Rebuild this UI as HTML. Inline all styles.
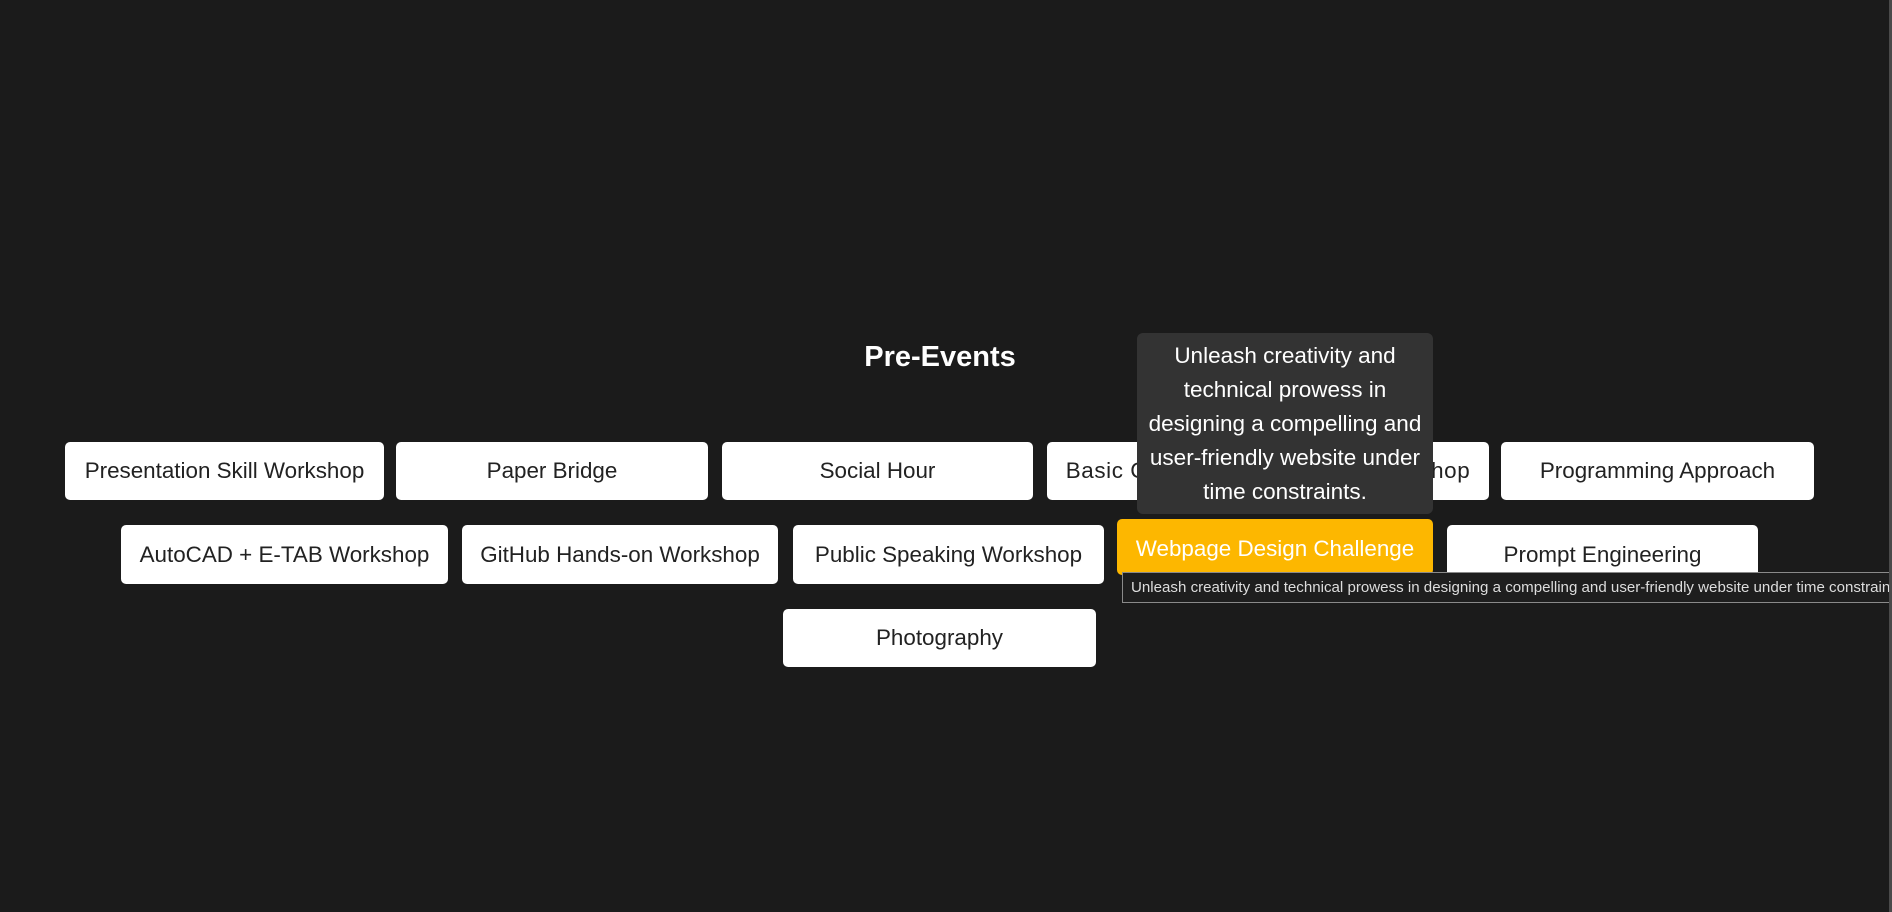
<!DOCTYPE html>
<html><head><meta charset="utf-8"><style>
html,body{margin:0;padding:0;}
body{width:1892px;height:912px;background:#1b1b1b;position:relative;overflow:hidden;font-family:"Liberation Sans",Arial,sans-serif;}
.b{position:absolute;background:#fff;border-radius:5px;color:#222;font-size:22.4px;display:flex;align-items:center;justify-content:center;white-space:nowrap;overflow:hidden;}
h2{position:absolute;left:0;width:1880px;top:341px;margin:0;text-align:center;color:#fff;font-size:29px;font-weight:bold;}
.tip{position:absolute;left:1137px;top:333px;width:296px;height:181px;background:#333;border-radius:6px;color:#fff;font-size:22.5px;line-height:34px;text-align:center;box-sizing:border-box;padding:6px 4px;}
.nt{position:absolute;left:1122px;top:572px;width:780px;height:31px;background:#1e1e1e;border:1px solid #8a8a8a;box-sizing:border-box;color:#ddd;font-size:15.1px;line-height:29px;padding-left:8px;white-space:nowrap;overflow:hidden;}
.sb{position:absolute;right:0;top:0;width:3px;height:912px;background:#4a4a4a;}
</style></head><body>
<h2>Pre-Events</h2>
<div class="b" style="left:65px;top:442px;width:319px;height:58px">Presentation Skill Workshop</div>
<div class="b" style="left:396px;top:442px;width:312px;height:58px">Paper Bridge</div>
<div class="b" style="left:722px;top:442px;width:311px;height:58px">Social Hour</div>
<div class="b" style="left:1047px;top:442px;width:442px;height:58px;letter-spacing:0.6px">Basic Computer Networking Workshop</div>
<div class="b" style="left:1501px;top:442px;width:313px;height:58px">Programming Approach</div>
<div class="b" style="left:121px;top:525px;width:327px;height:59px">AutoCAD + E-TAB Workshop</div>
<div class="b" style="left:462px;top:525px;width:316px;height:59px">GitHub Hands-on Workshop</div>
<div class="b" style="left:793px;top:525px;width:311px;height:59px">Public Speaking Workshop</div>
<div class="b" style="left:1117px;top:519px;width:316px;height:56px;background:#fdb700;color:#fff;align-items:flex-start;padding-top:17px;box-sizing:border-box">Webpage Design Challenge</div>
<div class="b" style="left:1447px;top:525px;width:311px;height:59px">Prompt Engineering</div>
<div class="b" style="left:783px;top:609px;width:313px;height:58px">Photography</div>
<div class="tip">Unleash creativity and technical prowess in designing a compelling and user-friendly website under time constraints.</div>
<div class="nt">Unleash creativity and technical prowess in designing a compelling and user-friendly website under time constraints.</div>
<div class="sb"></div>
</body></html>
